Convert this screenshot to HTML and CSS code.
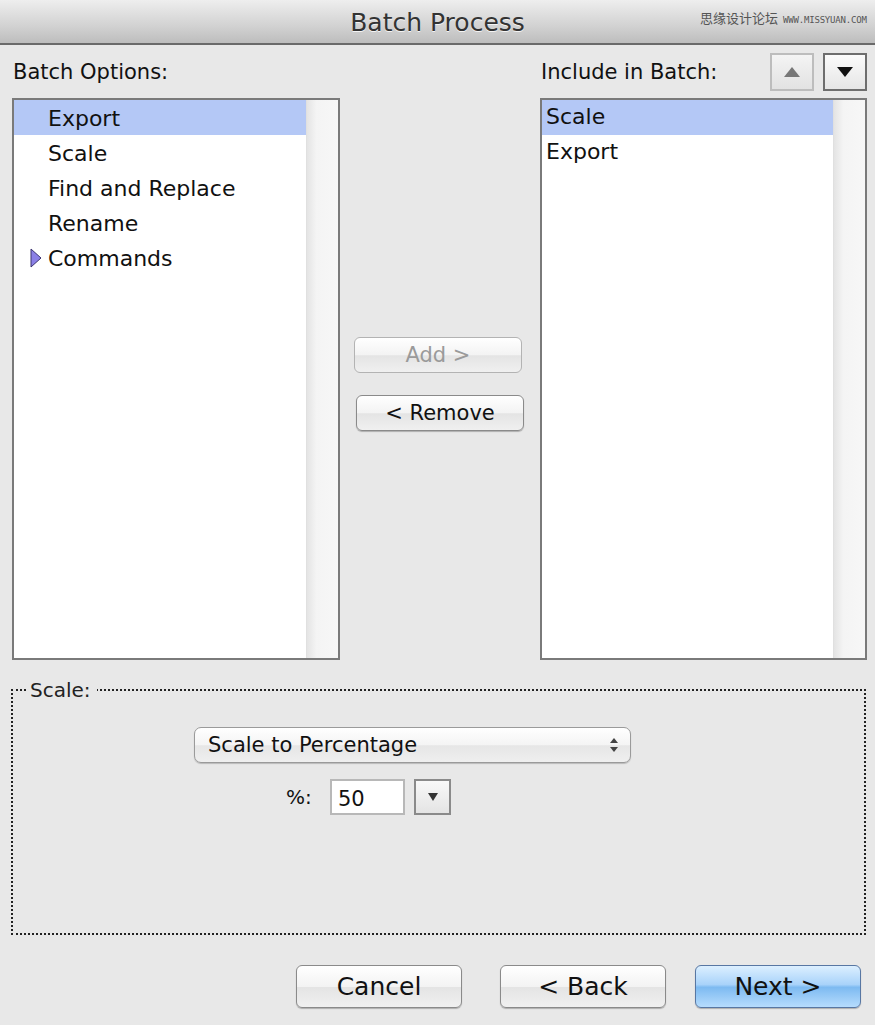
FILE: index.html
```html
<!DOCTYPE html>
<html lang="en">
<head>
    <meta charset="UTF-8">
    <title>Batch Process</title>
    <link rel="stylesheet" href="styles.css">
</head>
<body>
<div class="window">
    <!-- title bar -->
    <div class="titlebar">
        <h1 class="title">Batch Process</h1>
        <div class="mark"><span class="mark-cn">思缘设计论坛</span> <span class="mark-en">WWW.MISSYUAN.COM</span></div>
    </div>

    <div class="main">
        <div class="label-row">
            <div class="label">Batch Options:</div>
        </div>
        <div></div>
        <div class="label-row">
            <div class="label">Include in Batch:</div>
            <div class="arrows">
                <span class="arrow-btn dim"><svg width="16" height="10" viewBox="0 0 16 10"><polygon points="8,0 16,10 0,10" fill="#777"/></svg></span>
                <span class="arrow-btn dark"><svg width="16" height="10" viewBox="0 0 16 10"><polygon points="0,0 16,0 8,10" fill="#111"/></svg></span>
            </div>
        </div>

        <!-- left list -->
        <div class="listbox">
            <ul class="items">
                <li class="selected">Export</li>
                <li>Scale</li>
                <li>Find and Replace</li>
                <li>Rename</li>
                <li><svg class="tri" width="12" height="20" viewBox="0 0 12 20"><polygon points="1,1 11,10 1,19" fill="#8b80e6" stroke="#3c3570" stroke-width="1"/></svg>Commands</li>
            </ul>
            <div class="scroll"></div>
        </div>

        <!-- middle buttons -->
        <div class="middle">
            <button class="btn small disabled">Add &gt;</button>
            <button class="btn small">&lt; Remove</button>
        </div>

        <!-- right list -->
        <div class="listbox">
            <ul class="items right">
                <li class="selected">Scale</li>
                <li>Export</li>
            </ul>
            <div class="scroll"></div>
        </div>
    </div>

    <fieldset class="options">
        <legend>Scale:</legend>
        <div class="opt-body">
            <div class="select">
                <span>Scale to Percentage</span>
                <svg width="10" height="18" viewBox="0 0 10 18"><polygon points="5,2 9,7 1,7" fill="#444"/><polygon points="1,11 9,11 5,16" fill="#444"/></svg>
            </div>
            <div class="pct-row">
                <span class="pct-label">%:</span>
                <span class="pct-input">50</span>
                <span class="pct-drop"><svg width="10" height="8" viewBox="0 0 10 8"><polygon points="0,0 10,0 5,8" fill="#333"/></svg></span>
            </div>
        </div>
    </fieldset>

    <div class="footer">
        <button class="btn big">Cancel</button>
        <button class="btn big back">&lt; Back</button>
        <button class="btn big primary">Next &gt;</button>
    </div>
</div>
</body>
</html>
```

FILE: styles.css
```css
* {
    margin: 0;
    padding: 0;
    box-sizing: border-box;
}
body {
    background: #e8e8e8;
    font-family: "DejaVu Sans", "Noto Sans CJK SC", sans-serif;
    color: #111;
}
.window {
    width: 875px;
    height: 1025px;
    overflow: hidden;
}
.titlebar {
    position: relative;
    height: 45px;
    background: linear-gradient(#eeeeee, #d2d2d2 60%, #bdbdbd);
    border-bottom: 2px solid #6a6a6a;
}
.title {
    font-size: 25px;
    font-weight: normal;
    color: #333;
    text-align: center;
    line-height: 46px;
    text-shadow: 0 1px 0 #f4f4f4;
}
.mark {
    position: absolute;
    top: 8px;
    left: 700px;
    color: #555;
    white-space: nowrap;
}
.mark-cn {
    font-family: "Noto Sans CJK SC", sans-serif;
    font-size: 13px;
}
.mark-en {
    font-family: "DejaVu Sans Mono", monospace;
    font-size: 9px;
    letter-spacing: -0.2px;
}

.main {
    display: grid;
    grid-template-columns: 328px 200px 327px;
    grid-template-rows: 53px 562px;
    margin-left: 12px;
}
.label-row {
    display: flex;
    align-items: flex-start;
}
.label {
    font-size: 21px;
    padding-top: 15px;
    line-height: 24px;
    margin-left: 1px;
}
.arrows {
    display: flex;
    gap: 9px;
    margin-left: auto;
    margin-top: 8px;
}
.arrow-btn {
    display: flex;
    align-items: center;
    justify-content: center;
    width: 44px;
    height: 38px;
    background: linear-gradient(#f4f4f4, #e2e2e2);
}
.arrow-btn.dim {
    border: 2px solid #bdbdbd;
}
.arrow-btn.dark {
    border: 2px solid #6e6e6e;
    background: linear-gradient(#fbfbfb, #e6e6e6);
}

.listbox {
    display: flex;
    border: 2px solid #7a7a7a;
    background: #fff;
}
.items {
    flex: 1;
    list-style: none;
    font-size: 22px;
}
.items li {
    height: 35px;
    line-height: 38px;
    padding-left: 34px;
    white-space: nowrap;
}
.items.right li {
    padding-left: 4px;
    line-height: 33px;
}
.items li.selected {
    background: #b4c8f6;
}
.tri {
    vertical-align: -2px;
    margin-left: -18px;
    margin-right: 6px;
}
.scroll {
    width: 32px;
    background: linear-gradient(90deg, #e4e4e4, #f4f4f4 30%, #f7f7f7);
    border-left: 1px solid #e0e0e0;
}

.middle {
    display: flex;
    flex-direction: column;
    align-items: center;
    padding-top: 239px;
    gap: 22px;
}
.btn {
    font-family: "DejaVu Sans", sans-serif;
    color: #111;
    border: 1px solid #8a8a8a;
    border-radius: 6px;
    background: linear-gradient(#ffffff, #f3f3f3 50%, #e4e4e4 52%, #f0f0f0);
    box-shadow: 0 1px 1px rgba(0, 0, 0, 0.25);
}
.btn.small {
    width: 168px;
    height: 36px;
    font-size: 21px;
}
.middle .btn:first-child {
    margin-left: -4px;
}
.btn.disabled {
    color: #9a9a9a;
    border-color: #b3b3b3;
    box-shadow: none;
}

.options {
    margin: 18px 9px 0 11px;
    height: 257px;
    border: 2px dotted #222;
    padding: 0;
}
.options legend {
    margin-left: 14px;
    padding: 0 6px 0 3px;
    font-size: 20px;
    line-height: 24px;
    color: #222;
}
.opt-body {
    padding-left: 181px;
}
.select {
    display: flex;
    align-items: center;
    justify-content: space-between;
    width: 437px;
    height: 36px;
    margin-top: 25px;
    padding: 0 11px 0 13px;
    font-size: 21px;
    border: 1px solid #9a9a9a;
    border-radius: 7px;
    background: linear-gradient(#ffffff, #f4f4f4 50%, #e6e6e6 52%, #efefef);
    box-shadow: 0 1px 1px rgba(0, 0, 0, 0.2);
}
.pct-row {
    display: flex;
    align-items: center;
    margin-top: 16px;
    margin-left: 92px;
}
.pct-label {
    font-size: 20px;
    width: 44px;
}
.pct-input {
    width: 75px;
    height: 36px;
    padding-left: 6px;
    line-height: 36px;
    font-size: 21px;
    background: #fff;
    border: 2px solid #b8b8b8;
}
.pct-drop {
    display: flex;
    align-items: center;
    justify-content: center;
    width: 37px;
    height: 36px;
    margin-left: 9px;
    border: 2px solid #8a8a8a;
    background: linear-gradient(#f8f8f8, #e4e4e4);
}

.footer {
    display: flex;
    margin: 30px 0 0 296px;
}
.btn.big {
    width: 166px;
    height: 43px;
    font-size: 25px;
}
.btn.back {
    margin-left: 38px;
}
.btn.primary {
    margin-left: 29px;
    border-color: #5877a3;
    background: linear-gradient(#dcefff, #a9d3fa 45%, #7dbaf1 52%, #b6dcfd);
}
```
